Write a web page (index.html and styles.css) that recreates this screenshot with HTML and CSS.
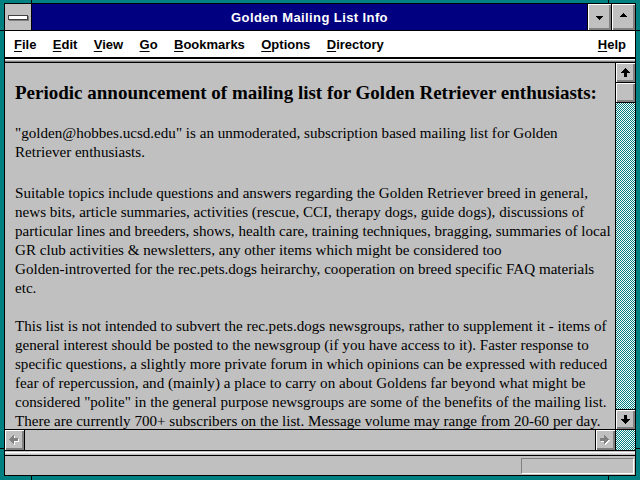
FILE: index.html
```html
<!DOCTYPE html>
<html>
<head>
<meta charset="utf-8">
<title>Golden Mailing List Info</title>
<link rel="stylesheet" href="styles.css">
</head>
<body>
<div class="frame">
  <span class="mark mark-top mark-l"></span>
  <span class="mark mark-top mark-r"></span>
  <span class="mark mark-bot mark-l"></span>
  <span class="mark mark-bot mark-r"></span>
  <span class="mark mark-side mark-left mark-hi"></span>
  <span class="mark mark-side mark-left mark-lo"></span>
  <span class="mark mark-side mark-right mark-hi"></span>
  <span class="mark mark-side mark-right mark-lo"></span>
  <div class="win">
    <div class="titlebar">
      <div class="sysmenu"><span class="sysbar"></span></div>
      <div class="caption">Golden Mailing List Info</div>
      <div class="tbtn tbtn-min">
        <svg width="7" height="4" viewBox="0 0 7 4" shape-rendering="crispEdges"><path d="M0 0h7v1h-1v1h-1v1h-1v1h-1v-1h-1v-1h-1v-1h-1z" fill="#000"/></svg>
      </div>
      <div class="tbtn tbtn-max">
        <svg width="7" height="4" viewBox="0 0 7 4" shape-rendering="crispEdges"><path d="M0 4h7v-1h-1v-1h-1v-1h-1v-1h-1v1h-1v1h-1v1h-1z" fill="#000"/></svg>
      </div>
    </div>
    <div class="menubar">
      <span class="mi"><u>F</u>ile</span>
      <span class="mi"><u>E</u>dit</span>
      <span class="mi"><u>V</u>iew</span>
      <span class="mi"><u>G</u>o</span>
      <span class="mi"><u>B</u>ookmarks</span>
      <span class="mi"><u>O</u>ptions</span>
      <span class="mi"><u>D</u>irectory</span>
      <span class="mi mi-help"><u>H</u>elp</span>
    </div>
    <div class="toolstrip"></div>
    <div class="main">
      <div class="doc">
        <h1 class="heading">Periodic announcement of mailing list for Golden Retriever enthusiasts:</h1>
        <p class="para para-first">"golden@hobbes.ucsd.edu" is an unmoderated, subscription based mailing list for Golden<br>Retriever enthusiasts.</p>
        <p class="para para-second">Suitable topics include questions and answers regarding the Golden Retriever breed in general,<br>news bits, article summaries, activities (rescue, CCI, therapy dogs, guide dogs), discussions of<br>particular lines and breeders, shows, health care, training techniques, bragging, summaries of local<br>GR club activities &amp; newsletters, any other items which might be considered too<br>Golden-introverted for the rec.pets.dogs heirarchy, cooperation on breed specific FAQ materials<br>etc.</p>
        <p class="para">This list is not intended to subvert the rec.pets.dogs newsgroups, rather to supplement it - items of<br>general interest should be posted to the newsgroup (if you have access to it). Faster response to<br>specific questions, a slightly more private forum in which opinions can be expressed with reduced<br>fear of repercussion, and (mainly) a place to carry on about Goldens far beyond what might be<br>considered "polite" in the general purpose newsgroups are some of the benefits of the mailing list.<br>There are currently 700+ subscribers on the list. Message volume may range from 20-60 per day.</p>
      </div>
      <div class="vscroll">
        <div class="sbtn sbtn-up">
          <svg width="9" height="9" viewBox="0 0 9 9" shape-rendering="crispEdges"><path d="M4 0h1v1h1v1h1v1h1v1h1v1h-3v4h-3v-4h-3v-1h1v-1h1v-1h1v-1h1z" fill="#000"/></svg>
        </div>
        <div class="thumb"></div>
        <div class="track"></div>
        <div class="sbtn sbtn-down">
          <svg width="9" height="9" viewBox="0 0 9 9" shape-rendering="crispEdges"><path d="M4 9h1v-1h1v-1h1v-1h1v-1h1v-1h-3v-4h-3v4h-3v1h1v1h1v1h1v1h1z" fill="#000"/></svg>
        </div>
      </div>
    </div>
    <div class="hscroll">
      <div class="hbtn hbtn-left">
        <svg width="10" height="10" viewBox="0 0 10 10" shape-rendering="crispEdges">
          <path d="M1 5v1h1v1h1v1h1v1h1v1h1v-3h4v-3h-4v-3h-1v1h-1v1h-1v1h-1v1z" fill="#fff"/>
          <path d="M0 4v1h1v1h1v1h1v1h1v1h1v-3h4v-3h-4v-3h-1v1h-1v1h-1v1h-1v1z" fill="#808080"/>
        </svg>
      </div>
      <div class="htrack"></div>
      <div class="hbtn hbtn-right">
        <svg width="10" height="10" viewBox="0 0 10 10" shape-rendering="crispEdges">
          <path d="M10 5v1h-1v1h-1v1h-1v1h-1v1h-1v-3h-4v-3h4v-3h1v1h1v1h1v1h1v1z" fill="#fff"/>
          <path d="M9 4v1h-1v1h-1v1h-1v1h-1v1h-1v-3h-4v-3h4v-3h1v1h1v1h1v1h1v1z" fill="#808080"/>
        </svg>
      </div>
      <div class="corner"></div>
    </div>
    <div class="sep"></div>
    <div class="statusbar"><div class="statusbox"></div></div>
  </div>
</div>
</body>
</html>
```

FILE: styles.css
```css
html, body {
  margin: 0;
  padding: 0;
}
body {
  width: 640px;
  height: 480px;
  overflow: hidden;
  background: #008080;
  font-family: "Liberation Sans", Arial, sans-serif;
}
.frame {
  position: relative;
  box-sizing: border-box;
  width: 640px;
  height: 480px;
  background: #008080;
  padding: 3px 4px 4px 4px;
}
.mark {
  position: absolute;
  background: #000;
}
.mark-top { top: 0; width: 1px; height: 3px; }
.mark-bot { bottom: 0; width: 1px; height: 4px; }
.mark-l { left: 31px; }
.mark-r { left: 608px; }
.mark-side { width: 4px; height: 1px; }
.mark-left { left: 0; }
.mark-right { right: 0; }
.mark-hi { top: 30px; }
.mark-lo { top: 448px; }

.win {
  box-sizing: border-box;
  height: 100%;
  border: 1px solid #000;
  display: flex;
  flex-direction: column;
  background: #c0c0c0;
}

/* title bar */
.titlebar {
  flex: none;
  box-sizing: border-box;
  height: 27px;
  border-bottom: 1px solid #000;
  display: flex;
}
.sysmenu {
  width: 26px;
  border-right: 1px solid #000;
  background: #c0c0c0;
  display: flex;
  align-items: center;
  justify-content: center;
}
.sysbar {
  display: block;
  width: 18px;
  height: 3px;
  border: 1px solid #404040;
  background: #fff;
  box-shadow: 1px 1px 0 #808080;
}
.caption {
  flex: 1;
  background: #000080;
  color: #fff;
  font-weight: bold;
  font-size: 13px;
  letter-spacing: 0.4px;
  display: flex;
  align-items: center;
  justify-content: center;
}
.tbtn {
  width: 24px;
  border-left: 1px solid #000;
  background: #c0c0c0;
  box-shadow: inset 1px 1px 0 #fff, inset -1px -1px 0 #808080, inset -2px -2px 0 #808080;
  display: flex;
  justify-content: center;
}
.tbtn svg { display: block; }
.tbtn-min { align-items: flex-start; padding-top: 12px; box-sizing: border-box; }
.tbtn-max { align-items: flex-start; padding-top: 9px; box-sizing: border-box; }

/* menu bar */
.menubar {
  flex: none;
  box-sizing: border-box;
  height: 28px;
  border-bottom: 2px solid #000;
  background: #fff;
  display: flex;
  align-items: center;
  gap: 16.4px;
  padding: 0 9px 0 9px;
  font-size: 13px;
  font-weight: bold;
  color: #000;
}
.mi u {
  text-decoration: underline;
  text-underline-offset: 2px;
  text-decoration-thickness: 1px;
}
.mi-help { margin-left: auto; }

.toolstrip {
  flex: none;
  height: 4px;
  background: linear-gradient(#fff 0 1px, #c0c0c0 1px 2px, #808080 2px 3px, #000 3px 4px);
}

/* main document area */
.main {
  flex: 1;
  display: flex;
  min-height: 0;
}
.doc {
  flex: 1;
  min-width: 0;
  overflow: hidden;
  padding: 19px 0 0 10px;
  font-family: "Liberation Serif", "Times New Roman", serif;
  color: #000;
  white-space: nowrap;
}
.heading {
  margin: 0 0 20px 0;
  font-size: 19px;
  line-height: 22px;
  font-weight: bold;
}
.para {
  margin: 0 0 20px 0;
  font-size: 15.1px;
  line-height: 19px;
}
.para-first { margin-bottom: 22px; }
.para-second { margin-bottom: 19px; }

/* vertical scrollbar */
.vscroll {
  flex: none;
  width: 19px;
  border-left: 1px solid #000;
  display: flex;
  flex-direction: column;
}
.sbtn {
  flex: none;
  height: 19px;
  background: #c0c0c0;
  box-shadow: inset 1px 1px 0 #fff, inset -1px -1px 0 #808080, inset -2px -2px 0 #808080;
  display: flex;
  align-items: center;
  justify-content: center;
}
.sbtn svg { display: block; margin: 0 1px 1px 0; }
.sbtn-up { border-bottom: 1px solid #000; }
.sbtn-down { border-top: 1px solid #000; }
.thumb {
  flex: none;
  height: 19px;
  border-bottom: 1px solid #000;
  background: #c0c0c0;
  box-shadow: inset 1px 1px 0 #fff, inset -1px -1px 0 #808080, inset -2px -2px 0 #808080;
}
.track, .corner {
  background: repeating-conic-gradient(#008080 0% 25%, #ffffff 0% 50%) 0 0 / 2px 2px;
}
.track { flex: 1; }

/* horizontal scrollbar */
.hscroll {
  flex: none;
  height: 20px;
  border-top: 1px solid #000;
  border-bottom: 1px solid #000;
  display: flex;
}
.hbtn {
  width: 19px;
  background: #c0c0c0;
  box-shadow: inset 1px 1px 0 #fff, inset -1px -1px 0 #808080, inset -2px -2px 0 #808080;
  display: flex;
  align-items: center;
  justify-content: center;
}
.hbtn svg { display: block; margin: 0 1px 1px 0; }
.hbtn-left { border-right: 1px solid #000; }
.hbtn-right { border-left: 1px solid #000; border-right: 1px solid #000; }
.htrack { flex: 1; background: #c0c0c0; }
.corner { width: 19px; }

.sep {
  flex: none;
  height: 5px;
  background: linear-gradient(#c0c0c0 0 1px, #fff 1px 2px, #dcdcdc 2px 3px, #c0c0c0 3px 4px, #000 4px 5px);
}

/* status bar */
.statusbar {
  flex: none;
  height: 19px;
  display: flex;
  justify-content: flex-end;
  align-items: flex-start;
  background: #c0c0c0;
}
.statusbox {
  box-sizing: border-box;
  width: 113px;
  height: 16px;
  margin: 2px 1px 0 0;
  border: 1px solid;
  border-color: #808080 #fff #fff #808080;
}
```
